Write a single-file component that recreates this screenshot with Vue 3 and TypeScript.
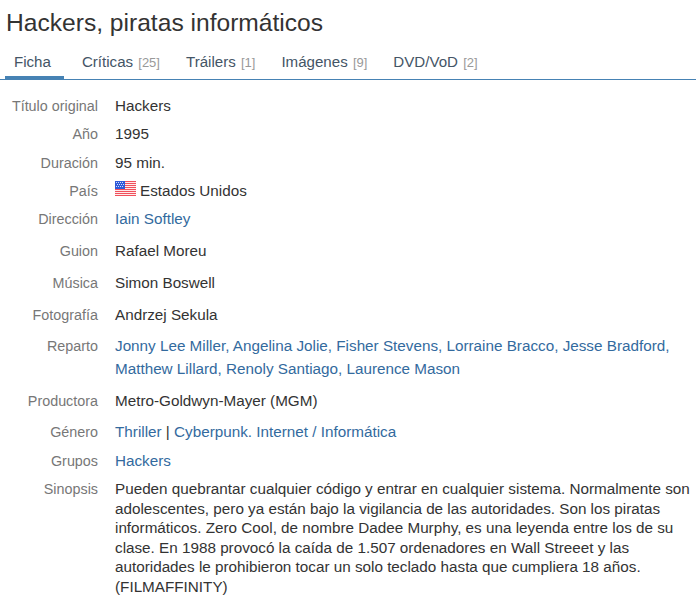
<template>
  <div class="page">
    <h1 class="title">Hackers, piratas informáticos</h1>

    <ul class="tabs">
      <li v-for="(tab, i) in tabs" :key="tab.name" class="tab" :class="{ active: i === 0 }">
        {{ tab.name }}
        <span v-if="tab.count" class="count">[{{ tab.count }}]</span>
      </li>
    </ul>

    <dl class="info">
      <dt class="h28">Título original</dt>
      <dd class="h28">Hackers</dd>
      <dt class="h29">Año</dt>
      <dd class="h29">1995</dd>
      <dt class="h27">Duración</dt>
      <dd class="h27">95 min.</dd>
      <dt class="h29 country-label">País</dt>
      <dd class="h29 country">
        <svg class="flag" width="21" height="15" viewBox="0 0 21 15">
          <rect width="21" height="15" fill="#ffeaea" />
          <path
            d="M0 .5h21M0 2.5h21M0 4.5h21M0 6.5h21M0 8.5h21M0 10.5h21M0 12.5h21M0 14.5h21"
            stroke="#f0505c"
            stroke-width="1"
          />
          <rect width="10" height="8" fill="#2f5ad8" />
          <path d="M1 1.5h8M2 3.5h7M1 5.5h8" stroke="#d0daf8" stroke-dasharray="1 1" />
        </svg>
        <span class="country-name">Estados Unidos</span>
      </dd>
      <dt class="h32">Dirección</dt>
      <dd class="h32 link">Iain Softley</dd>
      <dt class="h32">Guion</dt>
      <dd class="h32">Rafael Moreu</dd>
      <dt class="h32">Música</dt>
      <dd class="h32">Simon Boswell</dd>
      <dt class="h31">Fotografía</dt>
      <dd class="h31">Andrzej Sekula</dd>
      <dt class="cast-label">Reparto</dt>
      <dd class="cast link">
        <template v-for="(name, i) in cast" :key="name">{{ name }}<span v-if="i < cast.length - 1">, </span></template>
      </dd>
      <dt class="h31">Productora</dt>
      <dd class="h31">Metro-Goldwyn-Mayer (MGM)</dd>
      <dt class="h29">Género</dt>
      <dd class="h29 link">Thriller <span class="sep">|</span> Cyberpunk. Internet / Informática</dd>
      <dt class="h28">Grupos</dt>
      <dd class="h28 link">Hackers</dd>
      <dt>Sinopsis</dt>
      <dd class="synopsis">
        Pueden quebrantar cualquier código y entrar en cualquier sistema. Normalmente son adolescentes, pero ya están bajo la vigilancia de las autoridades. Son los piratas informáticos. Zero Cool, de nombre Dadee Murphy, es una leyenda entre los de su clase. En 1988 provocó la caída de 1.507 ordenadores en Wall Streeet y las autoridades le prohibieron tocar un solo teclado hasta que cumpliera 18 años. (FILMAFFINITY)
      </dd>
    </dl>
  </div>
</template>

<script setup lang="ts">
interface Tab {
  name: string;
  count?: number;
}

const tabs: Tab[] = [
  { name: 'Ficha' },
  { name: 'Críticas', count: 25 },
  { name: 'Tráilers', count: 1 },
  { name: 'Imágenes', count: 9 },
  { name: 'DVD/VoD', count: 2 },
];

const cast = [
  'Jonny Lee Miller',
  'Angelina Jolie',
  'Fisher Stevens',
  'Lorraine Bracco',
  'Jesse Bradford',
  'Matthew Lillard',
  'Renoly Santiago',
  'Laurence Mason',
];
</script>

<style>
html,
body {
  background: #fff;
}
</style>

<style scoped>
.page {
  width: 696px;
  height: 610px;
  overflow: hidden;
  font-family: 'Liberation Sans', Arial, sans-serif;
  font-size: 15.25px;
  color: #333;
}

.title {
  margin: 0;
  padding: 8px 0 0 6px;
  font-size: 24.6px;
  font-weight: 400;
  line-height: 30px;
}

.tabs {
  display: flex;
  margin: 0;
  padding: 0 0 0 5px;
  height: 41px;
  list-style: none;
  border-bottom: 1px solid #4682b4;
  box-sizing: content-box;
}

.tab {
  padding: 0 13px;
  line-height: 47px;
  font-size: 15.1px;
  color: #456;
  white-space: nowrap;
}

.tab.active {
  padding: 0 13px 0 9px;
  margin-right: 5px;
  height: 41px;
  box-sizing: border-box;
  border-bottom: 3px solid #4682b4;
}

.count {
  margin-left: 1px;
  font-size: 13px;
  color: #999;
}

.info {
  display: grid;
  grid-template-columns: 98px 1fr;
  column-gap: 17px;
  margin: 0;
  padding-top: 16px;
  line-height: 20px;
}

.info dt {
  text-align: right;
  color: #777;
  font-size: 14.35px;
  box-sizing: border-box;
}

.info dd {
  margin: 0;
}

.h27 { height: 27px; }
.h28 { height: 28px; }
.h29 { height: 29px; }
.h31 { height: 31px; }
.h32 { height: 32px; }

.link {
  color: #336a9e;
}

.sep {
  color: #333;
}

.country {
  display: flex;
  align-items: flex-start;
  gap: 4px;
}

.country-label,
.country-name {
  padding-top: 1px;
}

.flag {
  margin-top: 1px;
}

.cast {
  margin-top: -2px !important;
  padding-bottom: 11px;
  line-height: 23px;
}

.synopsis {
  line-height: 19.6px;
}
</style>
